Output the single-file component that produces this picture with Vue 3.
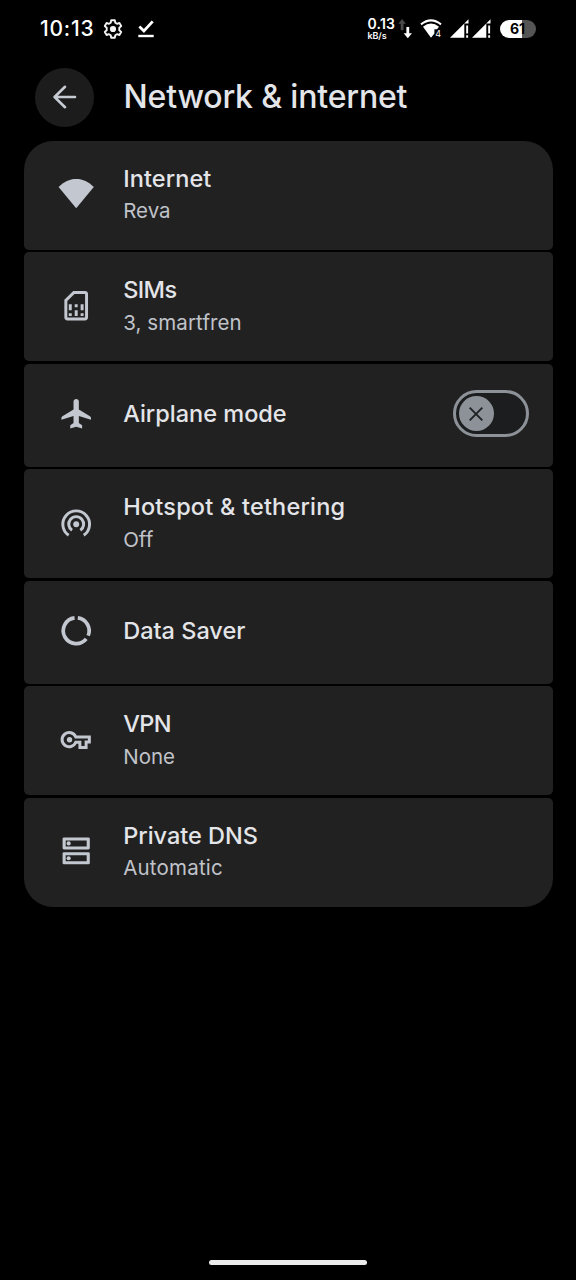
<script setup>
const rows = [
  { id: 'internet', title: 'Internet', sub: 'Reva' },
  { id: 'sims', title: 'SIMs', sub: '3, smartfren' },
  { id: 'airplane', title: 'Airplane mode', toggle: true },
  { id: 'hotspot', title: 'Hotspot & tethering', sub: 'Off' },
  { id: 'saver', title: 'Data Saver' },
  { id: 'vpn', title: 'VPN', sub: 'None' },
  { id: 'dns', title: 'Private DNS', sub: 'Automatic' }
]
</script>

<template>
  <div class="screen">
    <header class="status">
      <span class="clock">10:13</span>
      <svg class="gear" viewBox="0 0 20 20" fill="none" stroke="#f4f4f4" stroke-width="1.9" stroke-linejoin="round">
        <path d="M8.2 1.3h3.6l.5 2.5 1.7 1 2.4-.8 1.8 3.1-1.9 1.7v2.4l1.9 1.7-1.8 3.1-2.4-.8-1.7 1-.5 2.5H8.2l-.5-2.5-1.7-1-2.4.8-1.8-3.1 1.9-1.7V8.8L1.8 7.1 3.6 4l2.4.8 1.7-1z" />
        <circle cx="10" cy="10" r="3.1" fill="#f4f4f4" stroke="none" />
      </svg>
      <svg class="done" viewBox="0 0 16 20" fill="none" stroke="#fff">
        <path d="M1.4 7.6l4.5 4.4L14.7 2.4" stroke-width="2.8" />
        <path d="M.3 17h15.4" stroke-width="2.4" />
      </svg>
      <div class="speed"><b>0.13</b><small>kB/s</small></div>
      <svg class="updown" viewBox="0 0 16 22">
        <path d="M.3 5.8L4.1 1 7.9 5.8H5.5v6.500H2.700V5.800z" fill="#4a4a4a" />
        <path d="M5.6 15.2l4.2 5 4.2-5h-2.800V9H8.400v6.200z" fill="#fff" />
      </svg>
      <svg class="wifi" viewBox="0 0 22 20">
        <path d="M1 5.4Q11-2.600 21 5.400" fill="none" stroke="#fff" stroke-width="2" />
        <path d="M3 7.8Q11 1.400 19 7.800L17 10.300H14.400v4.200L11 18.700z" fill="#fff" />
        <text x="15.3" y="18" font-size="9" fill="#fff">4</text>
      </svg>
      <svg v-for="n in 2" :key="n" class="signal" viewBox="0 0 20 20">
        <path d="M0 18.7L18.500.2V4.500H14.300v14.200z" fill="#fff" />
        <path d="M16.2 6.500h1.900v8h-1.900zM16.200 16.300h1.900v2.400h-1.900z" fill="#fff" />
      </svg>
      <span class="battery">61</span>
    </header>

    <div class="appbar">
      <button class="back" aria-label="Back">
        <svg viewBox="0 0 24 24" fill="none" stroke="#c6cbd3" stroke-width="2.6" stroke-linecap="round" stroke-linejoin="round">
          <path d="M22 12H1.8M12 1.8L1.6 12 12 22.2" />
        </svg>
      </button>
      <h1>Network &amp; internet</h1>
    </div>

    <main class="list">
      <section v-for="row in rows" :key="row.id" class="row" :class="[row.id, { single: !row.sub }]">
        <svg class="icon" viewBox="-0.3 0 24 24" fill="#c3c7cf">
          <path v-if="row.id === 'internet'" d="M12 20.5L.1 6.1C3.600 2.400 7.500.6 12 .6S20.400 2.400 23.900 6.100z" />
          <template v-else-if="row.id === 'sims'">
            <path d="M18 2h-8L4 8v12c0 1.100.9 2 2 2h12c1.100 0 2-.9 2-2V4c0-1.100-.9-2-2-2zm0 18H6V8.830L10.830 4H18z" />
            <path d="M7 17h2v2H7zM15 17h2v2h-2zM7 11h2v4H7zM11 15h2v4h-2zM11 11h2v2h-2zM15 11h2v4h-2z" />
          </template>
          <path v-else-if="row.id === 'airplane'" d="M10.200 3.800C10.200 2.800 11 2 12 2s1.800.8 1.800 1.800V9.200L21.300 13.700q.700.500.700 1.200v1.200l-8.200-2.500V18.200L16 19.800V21.900L12 20.800 8 21.900V19.800L10.200 18.200V13.600L2 16.100V14.900q0-.7.700-1.200L10.200 9.200z" />
          <g v-else-if="row.id === 'hotspot'" fill="none" stroke="#c3c7cf" stroke-width="2">
            <path d="M6.9 20.5A9.050 9.050 0 1 1 17.100 20.500" />
            <path d="M9.2 17.1A5.050 5.050 0 1 1 14.800 17.100" />
            <circle cx="12" cy="13" r="2" fill="#c3c7cf" stroke="none" />
          </g>
          <g v-else-if="row.id === 'saver'" fill="none" stroke="#c3c7cf" stroke-width="2.5">
            <path d="M13.1 3.3A8.750 8.750 0 0 1 20.100 15.300" />
            <path d="M10.9 3.3A8.750 8.750 0 1 0 18.800 17.500" />
          </g>
          <template v-else-if="row.id === 'vpn'">
            <path d="M11.7 10.1H20.900V13.500H18.700V17.200H14.500V13.700H11.700A4.800 4.800 0 1 1 11.700 10.100z" fill="none" stroke="#c3c7cf" stroke-width="2" />
            <circle cx="7.5" cy="12" r="1.8" />
          </template>
          <g v-else>
            <path fill-rule="evenodd" d="M3.700 3h16.600a.9.900 0 0 1 .9.900v6.300a.9.900 0 0 1-.9.900H3.700a.9.900 0 0 1-.9-.900V3.900a.9.900 0 0 1 .9-.900zM4.900 5v4.100h14.200V5zM3.700 13h16.600a.9.900 0 0 1 .9.900v6.300a.9.900 0 0 1-.9.900H3.700a.9.900 0 0 1-.9-.900v-6.300a.9.900 0 0 1 .9-.900zM4.900 15v4.100h14.200V15z" />
            <circle cx="6.9" cy="7.05" r="1.4" />
            <circle cx="6.9" cy="17.05" r="1.4" />
          </g>
        </svg>
        <div class="copy">
          <h2>{{ row.title }}</h2>
          <p v-if="row.sub">{{ row.sub }}</p>
        </div>
        <button v-if="row.toggle" class="switch" role="switch" aria-checked="false" aria-label="Airplane mode">
          <span class="thumb">
            <svg viewBox="0 0 14 14" stroke="#202224" stroke-width="1.9"><path d="M.7.7l12.6 12.6M13.3.7L.7 13.3" /></svg>
          </span>
        </button>
      </section>
    </main>
    <div class="home"></div>
  </div>
</template>

<style>
html, body { background: #000; }
</style>

<style scoped>
.screen {
  box-sizing: border-box;
  width: 576px;
  height: 1280px;
  overflow: hidden;
  background: #000;
  color: #e4e5e9;
  font-family: Inter, Roboto, sans-serif;
  display: flex;
  flex-direction: column;
}
h1, h2, p { margin: 0; font-weight: 500; white-space: nowrap; }
button { padding: 0; border: 0; box-sizing: border-box; }
svg { display: block; flex: none; }
.status { height: 58px; display: flex; align-items: center; padding-left: 40px; color: #fff; }
.clock { width: 63px; flex: none; font: 500 21px/26px Inter, sans-serif; letter-spacing: .8px; }
.gear { width: 20px; height: 20px; }
.done { width: 16px; height: 20px; margin-left: 14.5px; }
.speed { margin-left: 214px; width: 30.5px; flex: none; display: flex; flex-direction: column; white-space: nowrap; }
.speed b { font: 600 14px/13px Inter, sans-serif; letter-spacing: .2px; }
.speed small { font: 600 9px/11px Inter, sans-serif; letter-spacing: -.1px; }
.updown { width: 16px; height: 22px; }
.wifi { width: 22px; height: 20px; margin-left: 6px; margin-right: 7.5px; font-family: Inter, sans-serif; }
.signal { width: 20px; height: 20px; margin-right: 2px; }
.battery {
  width: 36px; flex: none; height: 18px; margin-left: 6px; border-radius: 9px;
  background: linear-gradient(to right, #fff 61%, #555 61%);
  color: #000; font: 700 14px/18px Inter, sans-serif; text-align: center;
}
.appbar { height: 83px; display: flex; align-items: flex-start; padding-left: 35px; }
.back {
  width: 59px; height: 59px; margin-top: 9.5px; border-radius: 50%; background: #1c1c1c;
  display: flex; align-items: center; justify-content: center;
}
.back svg { width: 24px; height: 24px; }
h1 { margin: 19px 0 0 29.5px; font-size: 32px; line-height: 40px; font-weight: 500; letter-spacing: -.17px; }
.list { margin: 0 23.5px; display: flex; flex-direction: column; gap: 2.7px; }
.row {
  box-sizing: border-box; height: 108.8px; border-radius: 5px; background: #212121;
  display: flex; align-items: center; padding: 0 24px 0 34.8px;
}
.row.single { height: 102.8px; }
.row:first-child { border-radius: 29px 29px 5px 5px; }
.row:last-child { border-radius: 5px 5px 29px 29px; }
.icon { width: 35.5px; height: 35.5px; margin-top: -3px; }
.internet .icon { margin-top: 0; }
.saver .icon { margin-top: -3px; }
.copy { margin-left: 29.4px; flex: 1; }
.single .copy { padding-bottom: 3px; }
h2 { font-size: 23.5px; line-height: 32px; }
.copy p { padding-top: .7px; font-size: 20.5px; line-height: 32px; font-weight: 400; color: #c0c3ca; }
.row:not(.single) .copy { padding-bottom: .5px; }
.hotspot h2 { letter-spacing: .2px; }
.internet h2 { letter-spacing: .1px; }
.sims h2, .vpn h2 { letter-spacing: -.6px; }
.sims p { letter-spacing: .1px; }
.dns p { letter-spacing: .2px; }
.switch {
  width: 76px; height: 47px; margin-top: -3px; border: 3px solid #8d9299; border-radius: 24px;
  background: #1c1d1e; display: flex; align-items: center; padding-left: 3px;
}
.thumb {
  width: 35px; height: 35px; border-radius: 50%; background: #8d9299;
  display: flex; align-items: center; justify-content: center;
}
.thumb svg { width: 14px; height: 14px; }
.home { width: 158px; height: 5px; margin: auto auto 15px 209px; border-radius: 3px; background: #ececec; }
</style>
